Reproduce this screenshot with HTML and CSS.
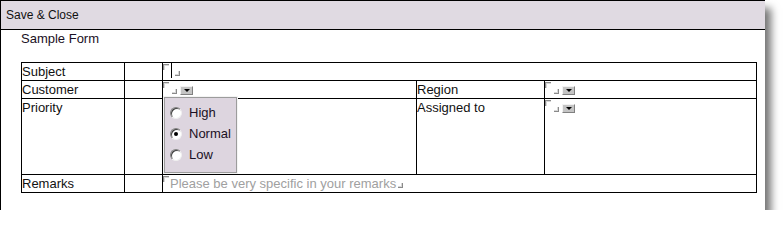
FILE: index.html
```html
<!DOCTYPE html>
<html>
<head>
<meta charset="utf-8">
<link rel="stylesheet" href="styles.css">
</head>
<body>
<div class="page">
  <div class="toolbar">Save &amp; Close</div>
  <div class="content">
    <div class="title">Sample Form</div>
    <div class="form">
      <div class="cell label">Subject</div>
      <div class="cell"></div>
      <div class="cell field span3"><span class="mk-start"></span><span class="caret"></span><span class="mk-end"></span></div>

      <div class="cell label">Customer</div>
      <div class="cell"></div>
      <div class="cell field"><span class="mk-start"></span><span class="mk-end gap"></span><span class="dd"></span></div>
      <div class="cell label">Region</div>
      <div class="cell field"><span class="mk-start"></span><span class="mk-end gap"></span><span class="dd"></span></div>

      <div class="cell label">Priority</div>
      <div class="cell"></div>
      <div class="cell">
        <div class="radios">
          <div class="radio"><span class="rb"></span>High</div>
          <div class="radio"><span class="rb on"></span>Normal</div>
          <div class="radio"><span class="rb"></span>Low</div>
        </div>
      </div>
      <div class="cell label">Assigned to</div>
      <div class="cell field"><span class="mk-start"></span><span class="mk-end gap"></span><span class="dd"></span></div>

      <div class="cell label">Remarks</div>
      <div class="cell"></div>
      <div class="cell field span3"><span class="mk-start"></span><span class="placeholder">Please be very specific in your remarks</span><span class="mk-end"></span></div>
    </div>
  </div>
</div>
</body>
</html>
```
FILE: styles.css
```css
html, body {
  margin: 0;
  padding: 0;
  background: #fff;
}
body {
  font-family: "Liberation Sans", Arial, sans-serif;
  color: #111;
}
.page {
  width: 764px;
  height: 210px;
  background: #fff;
  border-left: 1px solid #000;
  box-shadow: 6px 8px 8px rgba(0, 0, 0, 0.55);
}
.toolbar {
  height: 28px;
  border-top: 1px solid #000;
  border-bottom: 1px solid #000;
  background: #e0dae2;
  font-size: 12px;
  line-height: 28px;
  padding-left: 5px;
  color: #111;
}
.content {
  padding-left: 20px;
}
.title {
  font-size: 13px;
  line-height: 14px;
  padding-top: 2px;
  color: #1a1024;
}
.form {
  margin-top: 16px;
  display: grid;
  grid-template-columns: 102px 37px 253px 127px 211px;
  grid-template-rows: 17px 17px 75px 17px;
  gap: 1px;
  padding: 1px;
  background: #000;
  width: max-content;
}
.cell {
  background: #fff;
  font-size: 13px;
  line-height: 17px;
  position: relative;
}
.span3 {
  grid-column: span 3;
}
.field {
  display: flex;
  align-items: flex-start;
}
.mk-start {
  display: inline-block;
  width: 5px;
  height: 5px;
  margin-top: 1px;
  border-top: 1px solid #8a8a8a;
  border-left: 1px solid #8a8a8a;
  box-shadow: inset 1px 1px 0 #d8d8d8;
  flex: none;
}
.mk-end {
  display: inline-block;
  width: 4px;
  height: 4px;
  margin-top: 8px;
  margin-left: 3px;
  border-right: 1px solid #8a8a8a;
  border-bottom: 1px solid #8a8a8a;
  box-shadow: inset -1px -1px 0 #d8d8d8;
  flex: none;
}
.mk-end.gap {
  margin-left: 3px;
  margin-top: 8px;
}
.caret {
  display: inline-block;
  width: 1px;
  height: 15px;
  background: #000;
  margin-left: 2px;
  flex: none;
}
.mk-end + .dd {
  margin-left: 3px;
}
.dd {
  display: inline-block;
  position: relative;
  width: 11px;
  height: 7px;
  margin-top: 5px;
  background: #c4c4c4;
  border-top: 1px solid #f2f2f2;
  border-left: 1px solid #f2f2f2;
  border-right: 1px solid #808080;
  border-bottom: 1px solid #808080;
  flex: none;
}
.dd::after {
  content: "";
  position: absolute;
  left: 3px;
  top: 2px;
  border-left: 3px solid transparent;
  border-right: 3px solid transparent;
  border-top: 3px solid #000;
}
.placeholder {
  color: #a0a0a0;
  margin-left: 1px;
  font-size: 13px;
  line-height: 17px;
}
.field .placeholder + .mk-end {
  margin-left: 2px;
}
.radios {
  width: 71px;
  height: 70px;
  margin-top: -2px;
  padding-top: 4px;
  background: #ddd5df;
  border: 1px solid #9c9c9c;
  box-shadow: 0 0 0 1px #f4f4f4;
  margin-left: 1px;
}
.radio {
  display: flex;
  align-items: center;
  height: 21px;
  font-size: 13px;
  color: #1a1024;
}
.rb {
  display: inline-block;
  position: relative;
  width: 10px;
  height: 10px;
  margin-left: 5px;
  margin-right: 7px;
  border-radius: 50%;
  background: #fff;
  border-top: 1px solid #808080;
  border-left: 1px solid #808080;
  border-right: 1px solid #f0f0f0;
  border-bottom: 1px solid #f0f0f0;
  box-shadow: inset 1px 1px 0 #404040;
}
.rb.on::after {
  content: "";
  position: absolute;
  left: 3px;
  top: 3px;
  width: 4px;
  height: 4px;
  border-radius: 50%;
  background: #000;
}
```
